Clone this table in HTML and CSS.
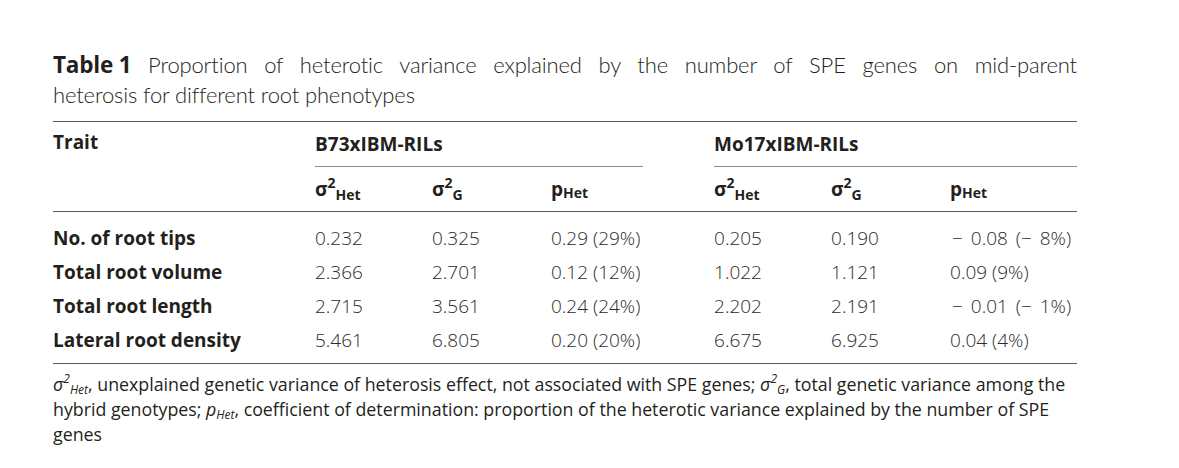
FILE: index.html
```html
<!DOCTYPE html>
<html lang="en">
<head>
<meta charset="utf-8">
<title>Table 1</title>
<link rel="stylesheet" href="styles.css">
</head>
<body>
<div class="page">
  <p class="caption"><span class="caption-first"><b class="label">Table 1</b> Proportion of heterotic variance explained by the number of SPE genes on mid-parent</span>heterosis for different root phenotypes</p>
  <table class="data">
    <colgroup>
      <col class="c-trait"><col class="c-a"><col class="c-b"><col class="c-c"><col class="c-gap"><col class="c-d"><col class="c-e"><col class="c-f">
    </colgroup>
    <thead>
      <tr class="group-row">
        <th class="trait" rowspan="2">Trait</th>
        <th class="group" colspan="3">B73xIBM-RILs</th>
        <th class="gap"></th>
        <th class="group" colspan="3">Mo17xIBM-RILs</th>
      </tr>
      <tr class="sub-row">
        <th>σ<span class="sup">2</span><span class="sub">Het</span></th>
        <th>σ<span class="sup">2</span><span class="sub">G</span></th>
        <th>p<span class="sub sub-p">Het</span></th>
        <th class="gap"></th>
        <th>σ<span class="sup">2</span><span class="sub">Het</span></th>
        <th>σ<span class="sup">2</span><span class="sub">G</span></th>
        <th>p<span class="sub sub-p">Het</span></th>
      </tr>
    </thead>
    <tbody>
      <tr class="first">
        <th>No. of root tips</th><td>0.232</td><td>0.325</td><td>0.29 (29%)</td><td></td><td>0.205</td><td>0.190</td><td class="neg">− 0.08 (− 8%)</td>
      </tr>
      <tr>
        <th>Total root volume</th><td>2.366</td><td>2.701</td><td>0.12 (12%)</td><td></td><td>1.022</td><td>1.121</td><td>0.09 (9%)</td>
      </tr>
      <tr>
        <th>Total root length</th><td>2.715</td><td>3.561</td><td>0.24 (24%)</td><td></td><td>2.202</td><td>2.191</td><td class="neg">− 0.01 (− 1%)</td>
      </tr>
      <tr class="last">
        <th>Lateral root density</th><td>5.461</td><td>6.805</td><td>0.20 (20%)</td><td></td><td>6.675</td><td>6.925</td><td>0.04 (4%)</td>
      </tr>
    </tbody>
  </table>
  <p class="note"><i>σ<span class="sup">2</span><span class="sub">Het</span></i>, unexplained genetic variance of heterosis effect, not associated with SPE genes; <i>σ<span class="sup">2</span><span class="sub">G</span></i>, total genetic variance among the hybrid genotypes; <i>p<span class="sub">Het</span></i>, coefficient of determination: proportion of the heterotic variance explained by the number of SPE genes</p>
</div>
</body>
</html>
```

FILE: styles.css
```css
html, body {
  margin: 0;
  padding: 0;
  background: #ffffff;
}

body {
  font-family: "Open Sans", "Noto Sans", sans-serif;
  color: #231f20;
}

.page {
  width: 1024px;
  padding: 50px 0 0 53px;
}

.caption {
  margin: 0;
  font-family: "Lato", "Open Sans", sans-serif;
  font-size: 22px;
  line-height: 30px;
  font-weight: 300;
  letter-spacing: -0.15px;
}

.caption-first {
  display: block;
  text-align: justify;
  text-align-last: justify;
}

.caption .label {
  display: inline-block;
  font-family: "Open Sans", sans-serif;
  font-size: 22.5px;
  font-weight: 700;
  letter-spacing: -0.2px;
}

.data {
  margin-top: 11px;
  width: 1024px;
  table-layout: fixed;
  border-collapse: collapse;
  border-top: 1px solid #5a5a5a;
  border-bottom: 1px solid #5a5a5a;
}

.c-trait { width: 262px; }
.c-a { width: 117px; }
.c-b { width: 119px; }
.c-c { width: 92px; }
.c-gap { width: 71px; }
.c-d { width: 117px; }
.c-e { width: 119px; }
.c-f { width: 127px; }

.data th,
.data td {
  padding: 0;
  text-align: left;
  white-space: nowrap;
}

.data thead th {
  font-size: 19px;
  font-weight: 700;
}

.group-row th {
  height: 44px;
  vertical-align: middle;
}

.group-row .trait {
  vertical-align: top;
  padding-top: 7px;
  border-bottom: 1px solid #5a5a5a;
}

.group-row .group {
  border-bottom: 1px solid #8a8a8a;
}

.sub-row th {
  height: 44px;
  vertical-align: middle;
  border-bottom: 1px solid #5a5a5a;
}

.sup {
  font-size: 14px;
  position: relative;
  top: -8px;
}

.sub {
  font-size: 14px;
  position: relative;
  top: 4px;
}

.sub-p {
  top: 2px;
}

.data tbody th {
  font-size: 19px;
  font-weight: 700;
  height: 34px;
  vertical-align: middle;
}

.data tbody td {
  font-size: 19px;
  font-weight: 300;
  height: 34px;
  vertical-align: middle;
  color: #2b2b2b;
}

.data tbody tr.first th,
.data tbody tr.first td {
  padding-top: 9px;
}

.data tbody tr.last th,
.data tbody tr.last td {
  padding-bottom: 6px;
}

.data td.neg {
  padding-left: 2px;
  word-spacing: 3px;
}

.note {
  margin: 9px 0 0;
  font-size: 17.8px;
  line-height: 22px;
  font-weight: 400;
}

.note .sup {
  font-size: 12px;
  top: -8px;
}

.note .sub {
  font-size: 12px;
  top: 3px;
}
```
